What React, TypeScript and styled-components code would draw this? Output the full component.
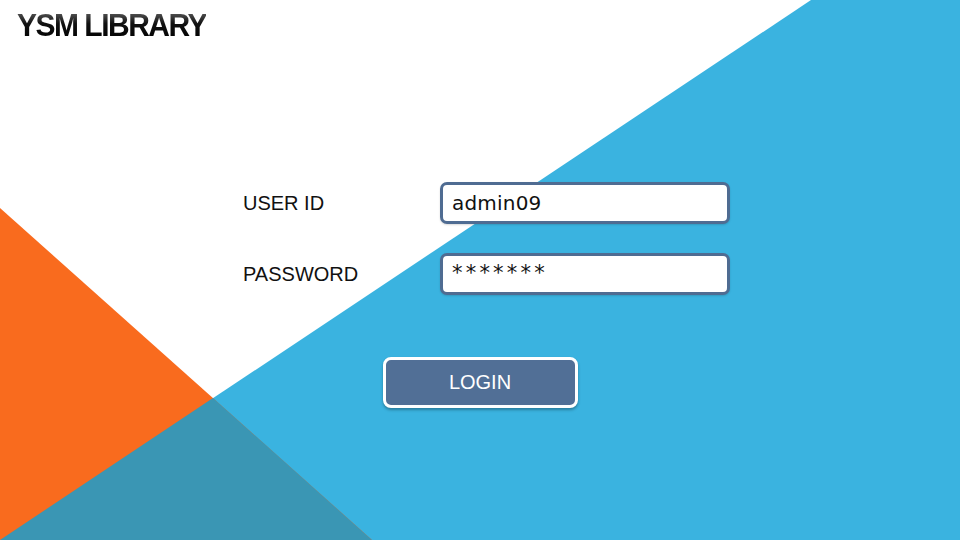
import React from "react";
import styled, { createGlobalStyle } from "styled-components";

const Global = createGlobalStyle`
  html, body { margin: 0; padding: 0; background: #ffffff; }
  body { font-family: "Liberation Sans", Arial, sans-serif; }
`;

const Page = styled.div`
  position: relative;
  width: 960px;
  height: 540px;
  overflow: hidden;
  background: #ffffff;
  display: flex;
  flex-direction: column;
`;

const Backdrop = styled.svg`
  position: absolute;
  inset: 0;
  width: 960px;
  height: 540px;
  z-index: 0;
`;

const Header = styled.header`
  position: relative;
  z-index: 1;
  padding: 11px 0 0 17px;
`;

const Title = styled.h1`
  margin: 0;
  font-family: "Liberation Sans", Arial, sans-serif;
  font-weight: 700;
  font-size: 30px;
  line-height: 30px;
  letter-spacing: -1.5px;
  background: linear-gradient(180deg, #6a6a6a 0%, #111111 45%, #000000 100%);
  -webkit-background-clip: text;
  background-clip: text;
  color: transparent;
  display: inline-block;
  transform: scaleY(1.06);
  transform-origin: 0 100%;
`;

const Form = styled.form`
  position: relative;
  z-index: 1;
  margin: 141px 0 0 243px;
  display: grid;
  grid-template-columns: 197px 290px;
  row-gap: 29px;
  align-items: center;
`;

const Label = styled.label`
  font-family: "Liberation Sans", Arial, sans-serif;
  font-size: 20px;
  color: #111111;
  line-height: 24px;
`;

const Field = styled.div<{ $secret?: boolean }>`
  box-sizing: border-box;
  height: 42px;
  border: 3px solid #4f6c92;
  border-radius: 7px;
  background: #ffffff;
  padding: 0 9px;
  display: flex;
  align-items: ${(p) => (p.$secret ? "flex-start" : "center")};
  padding-top: ${(p) => (p.$secret ? "5px" : "0")};
  font-family: "DejaVu Sans", Verdana, sans-serif;
  font-size: ${(p) => (p.$secret ? "21px" : "20px")};
  letter-spacing: ${(p) => (p.$secret ? "3.2px" : "0.2px")};
  color: #111111;
  box-shadow: 0 1px 2px rgba(0, 0, 0, 0.15);
`;

const Actions = styled.div`
  position: relative;
  z-index: 1;
  display: flex;
  justify-content: center;
  margin-top: 62px;
`;

const LoginButton = styled.button`
  box-sizing: border-box;
  width: 195px;
  height: 51px;
  border: 3px solid #ffffff;
  border-radius: 8px;
  background: #516f96;
  color: #ffffff;
  font-family: "Liberation Sans", Arial, sans-serif;
  font-size: 20px;
  padding: 0;
  box-shadow: 0 2px 3px rgba(0, 0, 0, 0.3);
  cursor: pointer;
`;

export default function App() {
  return (
    <>
      <Global />
      <Page>
        <Backdrop viewBox="0 0 960 540" aria-hidden="true">
          <polygon points="811,0 960,0 960,540 0,540" fill="#3ab3e0" />
          <polygon points="0,208 372,540 0,540" fill="#f96b1e" />
          <polygon points="213,398 372,540 0,540" fill="#3a96b4" />
        </Backdrop>
        <Header>
          <Title>YSM LIBRARY</Title>
        </Header>
        <Form onSubmit={(e) => e.preventDefault()}>
          <Label>USER ID</Label>
          <Field>admin09</Field>
          <Label>PASSWORD</Label>
          <Field $secret>*******</Field>
        </Form>
        <Actions>
          <LoginButton type="button">LOGIN</LoginButton>
        </Actions>
      </Page>
    </>
  );
}
